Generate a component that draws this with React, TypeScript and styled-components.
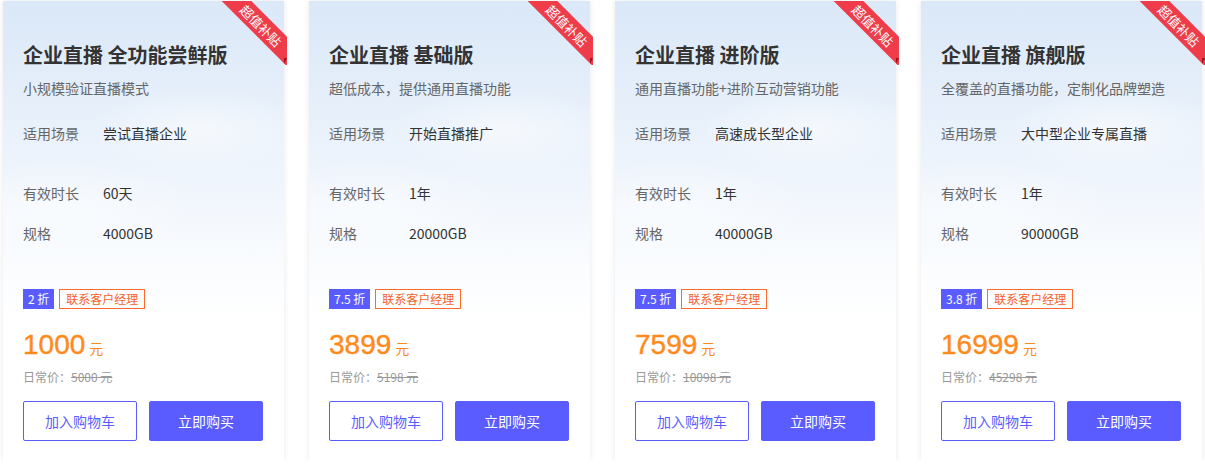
import React from "react";
import styled, { createGlobalStyle } from "styled-components";

const Global = createGlobalStyle`
  html, body { margin: 0; padding: 0; background: #fff; }
  body { font-family: "Noto Sans CJK SC", "Noto Sans", sans-serif; -webkit-font-smoothing: antialiased; }
  * { box-sizing: border-box; }
`;

const Row = styled.div`
  display: flex;
  gap: 25px;
  padding: 1px 3px 0 3px;
`;

const Card = styled.div`
  position: relative;
  width: 281px;
  height: 460px;
  padding: 40px 20px 20px 20px;
  display: flex;
  flex-direction: column;
  background:
    radial-gradient(ellipse 160px 60px at 70% 28%, rgba(255,255,255,0.55), rgba(255,255,255,0) 70%),
    radial-gradient(ellipse 200px 70px at 20% 45%, rgba(255,255,255,0.45), rgba(255,255,255,0) 70%),
    linear-gradient(180deg, #dae8f8 0%, #e6effa 22%, #f1f6fd 42%, #fafcfe 58%, #ffffff 70%);
  box-shadow: 0 0 6px rgba(0, 0, 0, 0.09);
`;

const RibbonClip = styled.div`
  position: absolute;
  top: 0;
  right: -3px;
  width: 68px;
  height: 64px;
  overflow: hidden;
  pointer-events: none;
`;

const RibbonBand = styled.div`
  position: absolute;
  left: -8px;
  top: 14px;
  width: 100px;
  height: 21px;
  background: #ee3c4a;
  color: #fff;
  font-size: 13px;
  line-height: 21px;
  text-align: center;
  transform: rotate(45deg);
`;

const RibbonFold = styled.div`
  position: absolute;
  right: -3px;
  top: 57px;
  width: 0;
  height: 0;
  border-left: 3px solid #a3121f;
  border-bottom: 6px solid transparent;
`;

const Title = styled.div`
  font-size: 20px;
  line-height: 28px;
  font-weight: 700;
  color: #333;
  white-space: nowrap;
`;

const Subtitle = styled.div`
  margin-top: 9px;
  font-size: 14px;
  line-height: 20px;
  color: #666;
  white-space: nowrap;
`;

const Specs = styled.div`
  margin-top: 25px;
  display: flex;
  flex-direction: column;
  gap: 20px;
`;

const Spec = styled.div<{ $tall?: boolean }>`
  display: flex;
  height: ${(p) => (p.$tall ? "40px" : "20px")};
  font-size: 14px;
  line-height: 20px;
`;

const SpecLabel = styled.div`
  width: 80px;
  flex: none;
  color: #666;
`;

const SpecValue = styled.div`
  color: #333;
`;

const Tags = styled.div`
  margin-top: 46px;
  display: flex;
  gap: 5px;
  height: 20px;
`;

const Discount = styled.div`
  height: 20px;
  padding: 0 5px;
  background: #5b5cff;
  color: #fff;
  font-size: 12px;
  line-height: 20px;
  white-space: pre;
`;

const Contact = styled.div`
  height: 20px;
  padding: 0 6px;
  border: 1px solid #ff6a2b;
  color: #f7612a;
  font-size: 12px;
  line-height: 18px;
`;

const Price = styled.div`
  margin-top: 16px;
  height: 40px;
  display: flex;
  align-items: baseline;
  color: #ff8a1c;
  line-height: 40px;
`;

const PriceNum = styled.span`
  font-size: 28px;
  font-family: "Liberation Sans", "Noto Sans", sans-serif;
  -webkit-text-stroke: 0.4px #ff8a1c;
`;

const PriceUnit = styled.span`
  margin-left: 4px;
  font-size: 14px;
`;

const Regular = styled.div`
  margin-top: 2px;
  font-size: 12px;
  line-height: 20px;
  color: #999;
`;

const Strike = styled.span`
  text-decoration: line-through;
`;

const Buttons = styled.div`
  margin-top: 14px;
  display: flex;
  gap: 12px;
`;

const Btn = styled.button<{ $primary?: boolean }>`
  width: 114px;
  height: 40px;
  border-radius: 2px;
  border: 1px solid #5b5cff;
  background: ${(p) => (p.$primary ? "#5b5cff" : "#fff")};
  color: ${(p) => (p.$primary ? "#fff" : "#5b5cff")};
  font-family: "Noto Sans CJK SC", sans-serif;
  font-size: 14px;
  cursor: pointer;
  padding: 0;
`;

const plans = [
  { name: "全功能尝鲜版", desc: "小规模验证直播模式", scene: "尝试直播企业", time: "60天", size: "4000GB", off: "2 折", price: "1000", regular: "5000" },
  { name: "基础版", desc: "超低成本，提供通用直播功能", scene: "开始直播推广", time: "1年", size: "20000GB", off: "7.5 折", price: "3899", regular: "5198" },
  { name: "进阶版", desc: "通用直播功能+进阶互动营销功能", scene: "高速成长型企业", time: "1年", size: "40000GB", off: "7.5 折", price: "7599", regular: "10098" },
  { name: "旗舰版", desc: "全覆盖的直播功能，定制化品牌塑造", scene: "大中型企业专属直播", time: "1年", size: "90000GB", off: "3.8 折", price: "16999", regular: "45298" },
];

export default function App() {
  return (
    <>
      <Global />
      <Row>
        {plans.map((p) => (
          <Card key={p.name}>
            <RibbonClip>
              <RibbonBand>超值补贴</RibbonBand>
            </RibbonClip>
            <RibbonFold />
            <Title>企业直播 {p.name}</Title>
            <Subtitle>{p.desc}</Subtitle>
            <Specs>
              <Spec $tall>
                <SpecLabel>适用场景</SpecLabel>
                <SpecValue>{p.scene}</SpecValue>
              </Spec>
              <Spec>
                <SpecLabel>有效时长</SpecLabel>
                <SpecValue>{p.time}</SpecValue>
              </Spec>
              <Spec>
                <SpecLabel>规格</SpecLabel>
                <SpecValue>{p.size}</SpecValue>
              </Spec>
            </Specs>
            <Tags>
              <Discount>{p.off}</Discount>
              <Contact>联系客户经理</Contact>
            </Tags>
            <Price>
              <PriceNum>{p.price}</PriceNum>
              <PriceUnit>元</PriceUnit>
            </Price>
            <Regular>
              日常价：<Strike>{p.regular} 元</Strike>
            </Regular>
            <Buttons>
              <Btn>加入购物车</Btn>
              <Btn $primary>立即购买</Btn>
            </Buttons>
          </Card>
        ))}
      </Row>
    </>
  );
}
